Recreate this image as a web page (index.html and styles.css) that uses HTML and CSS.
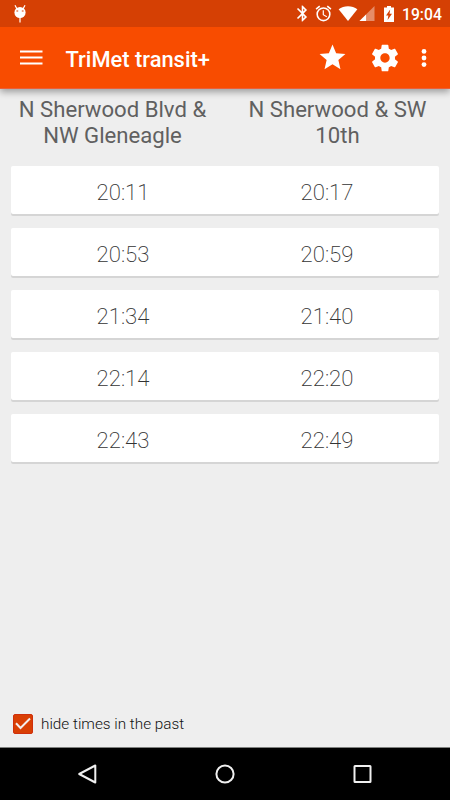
FILE: index.html
```html
<!DOCTYPE html>
<html lang="en">
<head>
<meta charset="utf-8">
<title>TriMet transit+</title>
<link rel="stylesheet" href="styles.css">
</head>
<body>
<div class="status">
  <svg class="bot" width="14" height="20" viewBox="0 0 14 20"><path d="M2 1.200 4 5M12 1.200 10 5" stroke="#fff" stroke-width="1.200"/><path d="M6.200 12h1.600v6.500H6.200z" fill="#fbd0bd"/><ellipse cx="7" cy="8.500" rx="5.600" ry="5.600" fill="#fff"/><path d="M3.400 7h1.800M8.800 7h1.800" stroke="#d64003" stroke-width="1.100"/></svg>
  <svg class="bt" viewBox="0 0 24 24"><path d="M17.71 7.71 12 2h-1v7.59L6.41 5 5 6.41 10.59 12 5 17.59 6.41 19 11 14.41V22h1l5.71-5.71-4.3-4.29 4.3-4.29zM13 5.83l1.88 1.88L13 9.59V5.83zm1.88 10.46L13 18.17v-3.76l1.88 1.88z"/></svg>
  <svg class="alarm" viewBox="0 0 24 24"><path d="M22 5.72l-4.6-3.86-1.29 1.53 4.6 3.86L22 5.72zM7.88 3.39 6.6 1.86 2 5.71l1.29 1.53 4.59-3.85zM12.5 8H11v6l4.75 2.85.75-1.23-4-2.37V8zM12 4a9 9 0 1 0 0 18 9 9 0 0 0 0-18zm0 16a7 7 0 1 1 0-14 7 7 0 0 1 0 14z"/></svg>
  <svg class="wifi" viewBox="0 0 20 16"><path d="M0 3.500C5.500-.8 14.500-.8 20 3.500L10 16z"/></svg>
  <svg class="signal" viewBox="0 0 16 16"><path d="M0 16 16 0v16z" opacity=".4"/><path d="M0 16 7 9v7z"/></svg>
  <svg class="battery" viewBox="0 0 10 16"><path fill-rule="evenodd" d="M3 0h4v1.500h3V16H0V1.500h3zM6.200 3.500 2 9.500h2.400L3.600 14 8 7.700H5.500z"/></svg>
  <span class="clock">19:04</span>
</div>
<header class="appbar">
  <svg class="menu" width="23" height="15" viewBox="0 0 23 15"><path d="M0 .5h22.500v2H0zM0 6.500h22.500v2H0zM0 12.500h22.500v2H0z"/></svg>
  <h1 class="title">TriMet transit+</h1>
  <svg class="star" viewBox="0 0 24 24"><path d="M12 17.270 18.180 21l-1.640-7.030L22 9.240l-7.190-.61L12 2 9.190 8.630 2 9.240l5.460 4.730L5.820 21z"/></svg>
  <svg class="gear" viewBox="0 0 24 24"><path d="M19.43 12.98c.04-.32.07-.64.07-.98s-.03-.66-.07-.98l2.110-1.650c.19-.15.24-.42.12-.64l-2-3.460c-.12-.22-.39-.3-.61-.22l-2.490 1c-.52-.4-1.080-.73-1.690-.98l-.38-2.650C14.460 2.180 14.250 2 14 2h-4c-.25 0-.46.18-.49.42l-.38 2.650c-.61.25-1.170.59-1.690.98l-2.490-1c-.23-.09-.49 0-.61.22l-2 3.460c-.13.22-.07.49.12.64l2.110 1.650c-.04.32-.07.65-.07.98s.03.66.07.98l-2.110 1.650c-.19.15-.24.42-.12.64l2 3.460c.12.22.39.3.61.22l2.490-1c.52.4 1.080.73 1.690.98l.38 2.650c.03.24.24.42.49.42h4c.25 0 .46-.18.49-.42l.38-2.650c.61-.25 1.170-.59 1.690-.98l2.490 1c.23.09.49 0 .61-.22l2-3.460c.12-.22.07-.49-.12-.64l-2.110-1.650zM12 15.500c-1.930 0-3.500-1.570-3.500-3.500s1.570-3.500 3.500-3.500 3.500 1.570 3.500 3.500-1.570 3.500-3.500 3.500z"/></svg>
  <svg class="more" width="6" height="20" viewBox="0 0 6 20"><circle cx="3" cy="3.400" r="2.400"/><circle cx="3" cy="10" r="2.400"/><circle cx="3" cy="16.600" r="2.400"/></svg>
</header>
<main class="content">
  <div class="heads"><h2>N Sherwood Blvd &amp;<br>NW Gleneagle</h2><h2>N Sherwood &amp; SW<br>10th</h2></div>
  <div class="cards">
    <div class="card"><span>20:11</span><span>20:17</span></div>
    <div class="card"><span>20:53</span><span>20:59</span></div>
    <div class="card"><span>21:34</span><span>21:40</span></div>
    <div class="card"><span>22:14</span><span>22:20</span></div>
    <div class="card"><span>22:43</span><span>22:49</span></div>
  </div>
  <div class="option">
    <svg width="20" height="20" viewBox="0 0 20 20"><rect x=".5" y=".5" width="19" height="19" rx="1.500" fill="#d93f04" stroke="#cf2f0c"/><path d="M3 9.300 7.500 14 17 4.500" fill="none" stroke="#f4eeee" stroke-width="2"/></svg>
    <span>hide times in the past</span>
  </div>
</main>
<nav class="nav">
  <svg width="20" height="22" viewBox="0 0 20 22"><path d="M18.300 2.500v17L2.200 11z"/></svg>
  <svg width="20" height="20" viewBox="0 0 20 20"><circle cx="10" cy="10" r="8.600"/></svg>
  <svg width="20" height="20" viewBox="0 0 20 20"><rect x="1.500" y="2" width="16" height="16" rx=".5"/></svg>
</nav>
</body>
</html>
```

FILE: styles.css
```css
* { box-sizing: border-box; }
body {
  margin: 0;
  width: 450px;
  height: 800px;
  display: flex;
  flex-direction: column;
  overflow: hidden;
  background: #eee;
  font-family: Roboto, sans-serif;
}
svg { display: block; flex: none; }
.status {
  position: relative;
  z-index: 2;
  height: 27px;
  flex: none;
  display: flex;
  align-items: center;
  padding: 0 9px 0 13px;
  background: #d54004;
  color: #fff;
  fill: #fff;
}
.bot { margin-right: auto; }
.bt { width: 19px; height: 19px; }
.alarm { width: 19px; height: 19px; margin-left: 2px; }
.wifi { width: 20px; height: 15px; margin-left: 5px; }
.signal { width: 16px; height: 15px; margin-left: 1px; }
.battery { width: 10px; height: 16px; margin-left: 9px; }
.clock { width: 39px; margin-left: 8px; font-size: 15.700px; font-weight: 500; line-height: 27px; white-space: nowrap; padding-top: 2px; }
.appbar {
  position: relative;
  height: 62px;
  flex: none;
  display: flex;
  align-items: center;
  padding: 0 23.500px 0 19px;
  background: #f84c00;
  border-bottom: 1px solid #ea5f38;
  color: #fff;
  fill: #fff;
  box-shadow: 0 3px 7px rgba(0, 0, 0, .35);
}
.title { flex: 1; margin: 0 0 0 23px; padding-top: 4px; font-size: 21.900px; font-weight: 500; line-height: 28px; }
.star { width: 31px; height: 31px; }
.gear { width: 32px; height: 32px; margin: 1px 0 0 21px; }
.more { margin-left: 20px; }
.menu { margin-left: .5px; }
.content { flex: 1; display: flex; flex-direction: column; padding: 7px 11px 12px; }
.heads { display: flex; margin: 0 -11px; }
h2 { flex: 1; margin: 0; color: #606060; font-size: 22.150px; font-weight: 400; line-height: 26px; text-align: center; white-space: nowrap; }
.cards { display: grid; gap: 14px; margin-top: 18px; }
.card {
  height: 48px;
  display: flex;
  padding: 0 10px;
  border-radius: 2px;
  background: #fff;
  box-shadow: 0 2px 0 #d5d5d5;
  color: #333;
  font-size: 22.150px;
  font-weight: 200;
  line-height: 52px;
  text-align: center;
}
.card span { flex: 1; }
.option { display: flex; align-items: center; gap: 8px; margin-top: auto; padding-left: 2px; color: #111; font-size: 15.300px; font-weight: 300; line-height: 22px; }
.option span { padding-top: 1px; }
.nav {
  height: 53px;
  flex: none;
  display: flex;
  justify-content: space-between;
  align-items: center;
  padding: 0 77px;
  background: #000;
  border-top: 1px solid #7f817f;
  fill: none;
  stroke: #f0f0f0;
  stroke-width: 2;
  stroke-linejoin: round;
}
```
